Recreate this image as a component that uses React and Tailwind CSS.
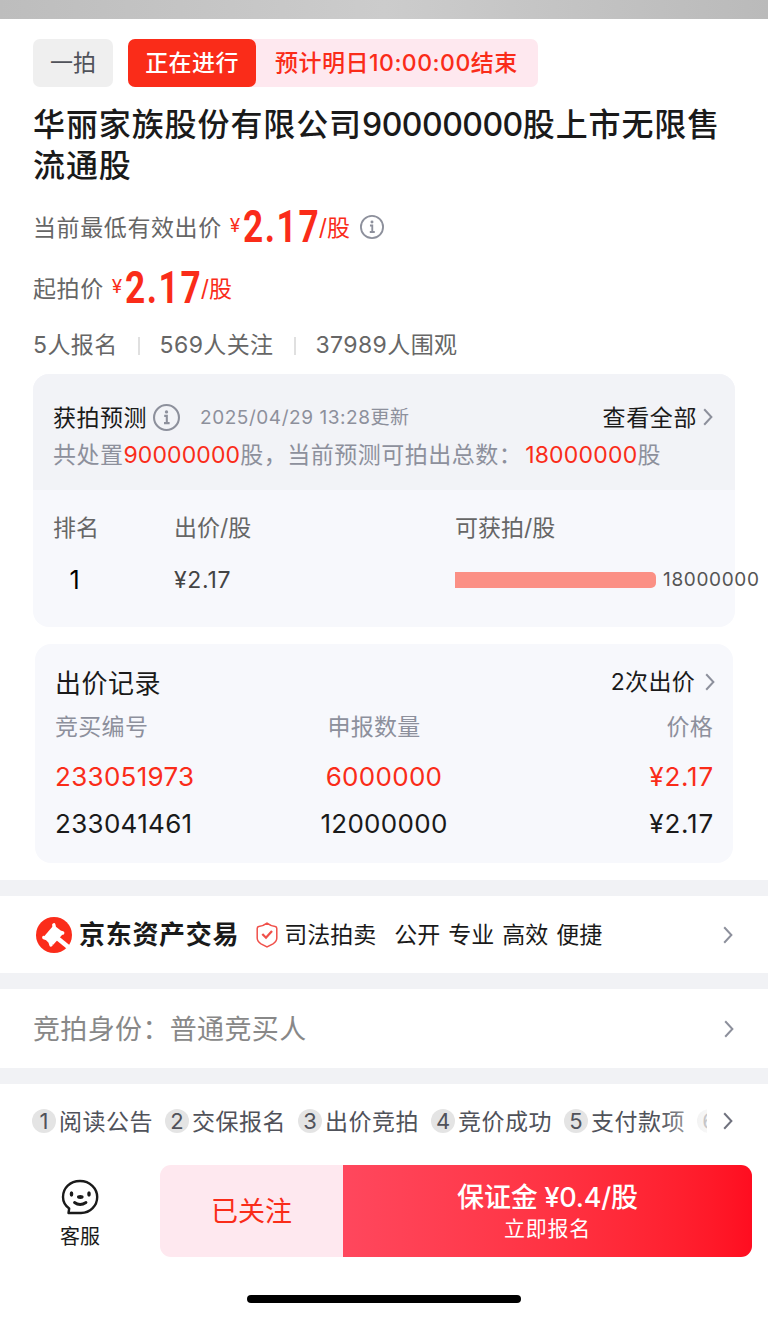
import React from "react";

const forecast = [{ rank: 1, price: "¥2.17", amount: "18000000" }];

const bids = [
  { id: "233051973", amount: "6000000", price: "¥2.17", leading: true },
  { id: "233041461", amount: "12000000", price: "¥2.17", leading: false },
];

const steps = ["阅读公告", "交保报名", "出价竞拍", "竞价成功", "支付款项"];

const slogans = ["公开", "专业", "高效", "便捷"];

function Chevron({ className = "" }) {
  return (
    <svg viewBox="0 0 10 18" className={`h-[18px] w-[10px] shrink-0 ${className}`} fill="none" stroke="currentColor" strokeWidth="2">
      <path d="M1.2 1.2L8.4 9l-7.2 7.8" />
    </svg>
  );
}

function InfoIcon({ className = "" }) {
  return (
    <svg viewBox="0 0 26 26" className={`shrink-0 text-[#8d909c] ${className}`} fill="none" stroke="currentColor" strokeWidth="2">
      <circle cx="13" cy="13" r="12" />
      <circle cx="13" cy="7.6" r="1.6" fill="currentColor" stroke="none" />
      <path d="M10.8 11.4h2.5v7M10.6 18.4h5.4" strokeWidth="2" />
    </svg>
  );
}

function GavelLogo() {
  return (
    <svg viewBox="0 0 36 36" className="h-9 w-9 shrink-0">
      <circle cx="18" cy="18" r="18" fill="#fb2c1a" />
      <path d="M17 9l9.500 8.500-9.500 10.500L8 19.500z" fill="#fff" />
      <g stroke="#fff" strokeLinecap="round" strokeLinejoin="round" fill="none">
        <path d="M17.800 7.800l.7 3 5.500 4.400 2.700.8" strokeWidth="3.400" />
        <path d="M7.800 20.600l3 1 3.200 3.200 1 3.200" strokeWidth="3.400" />
        <path d="M20 20l13.500 11" strokeWidth="4.600" strokeLinecap="butt" />
      </g>
    </svg>
  );
}

function ShieldIcon() {
  return (
    <svg viewBox="0 0 22 26" className="h-[26px] w-[22px] shrink-0" fill="none" stroke="#f0504a">
      <path d="M11 1.200C14 3.600 17 4.300 19.200 4.600Q20.800 4.900 20.800 6.500V16Q20.800 19.500 17 21.800L11 25 5 21.800Q1.200 19.500 1.200 16V6.500Q1.200 4.900 2.800 4.600C5 4.300 8 3.600 11 1.200z" strokeWidth="1.500" />
      <path d="M6.300 12l3.700 3.700 6-6.700" strokeWidth="2.300" />
    </svg>
  );
}

function ServiceIcon() {
  return (
    <svg viewBox="0 0 38 36" className="h-9 w-[38px]" fill="none" stroke="#1a1a1a" strokeWidth="2.4" strokeLinecap="round" strokeLinejoin="round">
      <path d="M7.500 34H20C29.500 34 36.200 26.500 36.200 18S29 2 19 2 2 9 2 18c0 4.500 2 8.500 6.200 11.500z" />
      <path d="M13.500 23.500q5.500 4 11.500 0" strokeWidth="2.800" />
      <g fill="#1a1a1a" stroke="none">
        <ellipse cx="10.5" cy="15" rx="1.8" ry="2.8" />
        <ellipse cx="28" cy="15" rx="1.8" ry="2.8" />
        <ellipse cx="19.3" cy="18" rx="3.3" ry="1.9" />
      </g>
    </svg>
  );
}

function Price({ label, children }) {
  return (
    <div className="flex h-[61px] items-center text-[23px] text-[#666]">
      <span className="pt-[3px] tracking-[0.6px]">{label}</span>
      <span className="ml-2 flex items-center text-[#fa2c19]">
        <span className="w-[13px] text-[19px]">¥</span>
        <span className="w-[76px] whitespace-nowrap">
          <span className="inline-block origin-left scale-x-[0.8] font-[Roboto] text-[44px] leading-[60px] font-bold tracking-[2px]">2.17</span>
        </span>
        <span className="pt-[3px] text-[23px]">/股</span>
      </span>
      {children}
    </div>
  );
}

function Forecast() {
  return (
    <section className="h-[253px] w-[702px] rounded-[16px] bg-[#f7f8fc]">
      <div className="h-[116px] rounded-t-[16px] bg-[#f2f3f7] px-5 pt-6">
        <div className="flex h-[38px] items-center">
          <span className="pt-0.5 text-[23px] tracking-[0.5px] text-[#1a1a1a]">获拍预测</span>
          <InfoIcon className="ml-1.5 h-[27px] w-[27px]" />
          <span className="ml-5 pt-0.5 text-[19px] tracking-[0.55px] text-[#8d909c]">2025/04/29 13:28更新</span>
          <span className="ml-auto pt-0.5 text-[23px] tracking-[0.6px] text-[#1a1a1a]">查看全部</span>
          <Chevron className="mr-0.5 ml-1.5 text-[#8d909c]" />
        </div>
        <p className="h-[38px] text-[23px] leading-[39px] tracking-[0.5px] whitespace-nowrap text-[#8d909c]">
          共处置<span className="tracking-[0.1px] text-[#fa2c19]">90000000</span>股，当前预测可拍出总数：
          <span className="ml-[3px] tracking-[0.2px] text-[#fa2c19]">18000000</span>股
        </p>
      </div>
      <div className="grid grid-cols-[121px_281px_1fr] pt-[13px] pl-5 text-[23px] text-[#666]">
        <span className="h-[51px] leading-[51px]">排名</span>
        <span className="h-[51px] leading-[51px]">出价/股</span>
        <span className="h-[51px] leading-[51px]">可获拍/股</span>
        {forecast.map((row) => (
          <React.Fragment key={row.rank}>
            <span className="w-[43px] text-center text-[25px] leading-[52px] text-black">{row.rank}</span>
            <span className="text-[23px] leading-[52px] tracking-[0.7px] text-[#444]">{row.price}</span>
            <span className="flex h-[51px] items-center">
              <i className="h-4 w-[201px] shrink-0 rounded-r-[5px] bg-[#fb9085]" />
              <span className="ml-[7px] pt-px text-[19px] tracking-[0.65px] text-[#555]">{row.amount}</span>
            </span>
          </React.Fragment>
        ))}
      </div>
    </section>
  );
}

function BidRecords() {
  return (
    <section className="mt-[17px] ml-0.5 h-[219px] w-[698px] rounded-[16px] bg-[#f7f8fc] px-5 pt-[15px]">
      <div className="flex h-[46px] items-center text-[#1a1a1a]">
        <span className="pt-0.5 text-[26px] tracking-[0.5px]">出价记录</span>
        <span className="ml-auto pt-px text-[23px] tracking-[0.3px]">2次出价</span>
        <Chevron className="-mr-0.5 ml-2.5 text-[#8d909c]" />
      </div>
      <div className="grid grid-cols-[210px_218px_230px] text-[23px] leading-[44px] tracking-[0.3px] text-[#8d909c]">
        <span>竞买编号</span>
        <span className="text-center">申报数量</span>
        <span className="text-right">价格</span>
      </div>
      <div className="pt-1">
        {bids.map((bid) => (
          <div
            key={bid.id}
            className={`grid grid-cols-[220px_218px_221px] text-[26px] leading-[47px] tracking-[0.3px] ${bid.leading ? "text-[#fa2c19]" : "text-[#1a1a1a]"}`}
          >
            <span>{bid.id}</span>
            <span className="text-center">{bid.amount}</span>
            <span className="text-right tracking-[0.8px]">{bid.price}</span>
          </div>
        ))}
      </div>
    </section>
  );
}

function StepNumber({ children }) {
  return (
    <span className="flex h-6 w-6 shrink-0 items-center justify-center rounded-full bg-[#e4e4e4] text-[22px] leading-6">{children}</span>
  );
}

function Steps() {
  return (
    <div className="flex h-[74px] items-center pl-8">
      <div className="relative flex w-[675px] items-center overflow-hidden text-[#50525a]">
        {steps.map((step, i) => (
          <div key={step} className="flex w-[133px] shrink-0 items-center whitespace-nowrap">
            <StepNumber>{i + 1}</StepNumber>
            <span className="ml-[3px] pt-0.5 text-[23px] tracking-[0.5px]">{step}</span>
          </div>
        ))}
        <StepNumber>{steps.length + 1}</StepNumber>
        <span className="absolute inset-y-0 right-0 w-12 bg-linear-to-r from-white/0 to-white/70" />
      </div>
      <Chevron className="ml-4 text-[#70727e]" />
    </div>
  );
}

export default function App() {
  return (
    <main className="h-[1319px] w-[768px] overflow-hidden bg-white font-['Inter','Noto_Sans_CJK_SC',sans-serif] text-[#1a1a1a]">
      <div className="h-[19px] bg-linear-to-r from-[#bdbdbd] via-[#cccccc] to-[#bababa]" />

      <div className="h-[861px] pt-5 pl-[33px]">
        <div className="flex h-12 text-[23px] leading-[48px]">
          <span className="w-20 rounded-[7px] bg-[#efefef] text-center text-[#50525a]">一拍</span>
          <div className="ml-[15px] flex w-[410px] rounded-[7px] bg-[#fee8ef]">
            <span className="w-32 rounded-[7px] bg-[#fa2c19] text-center font-medium tracking-[0.4px] text-white">正在进行</span>
            <span className="ml-[19px] font-medium tracking-[0.5px] whitespace-nowrap text-[#fa2c19]">预计明日10:00:00结束</span>
          </div>
        </div>

        <h1 className="mt-[17px] w-[710px] text-[32px] leading-[41px] font-medium tracking-[0.9px]">
          华丽家族股份有限公司<span className="tracking-[-0.5px]">90000000</span>股上市无限售
          <br />
          流通股
        </h1>

        <div className="mt-2.5">
          <Price label="当前最低有效出价">
            <InfoIcon className="ml-2.5 h-6 w-6" />
          </Price>
          <Price label="起拍价" />
        </div>

        <div className="flex h-14 items-center pb-px text-[23px] tracking-[0.4px] text-[#666]">
          <span>5人报名</span>
          <i className="mx-5 h-[18px] w-0.5 bg-[#e0e0e0]" />
          <span>569人关注</span>
          <i className="mx-5 h-[18px] w-0.5 bg-[#e0e0e0]" />
          <span>37989人围观</span>
        </div>

        <Forecast />
        <BidRecords />
      </div>

      <div className="flex h-[109px] items-center border-y-[16px] border-[#f1f2f5] pr-[35px] pl-9">
        <GavelLogo />
        <span className="ml-[7px] text-[26px] font-bold tracking-[0.7px]">京东资产交易</span>
        <span className="ml-[17px] flex items-center">
          <ShieldIcon />
          <span className="ml-1.5 pt-0.5 text-[23px]">司法拍卖</span>
        </span>
        <span className="ml-[18px] flex gap-2 pt-0.5 text-[23px]">
          {slogans.map((s) => (
            <span key={s}>{s}</span>
          ))}
        </span>
        <Chevron className="ml-auto text-[#8d909c]" />
      </div>

      <div className="flex h-[95px] items-center justify-between border-b-[16px] border-[#f1f2f5] pr-[34px] pl-[33px]">
        <span className="pt-[3px] text-[27px] tracking-[0.35px] text-[#888]">竞拍身份：普通竞买人</span>
        <Chevron className="text-[#8d909c]" />
      </div>

      <Steps />

      <footer>
        <div className="flex h-[106px] pt-[7px] pr-4">
          <div className="flex w-40 flex-col items-center pt-3.5">
            <ServiceIcon />
            <span className="mt-[7px] text-[20px] leading-[30px]">客服</span>
          </div>
          <button className="h-[92px] w-[183px] rounded-l-[11px] bg-[#fee8ef] pt-[3px] text-[27px] text-[#fa2c19]">已关注</button>
          <button className="flex h-[92px] flex-1 flex-col items-center justify-center rounded-r-[11px] bg-linear-to-r from-[#ff475d] to-[#ff0d20] pt-1 text-white">
            <span className="text-[27px] leading-[32px] font-medium tracking-[-0.2px]">保证金 ¥0.4/股</span>
            <span className="text-[21px] leading-[30px] tracking-[0.7px]">立即报名</span>
          </button>
        </div>
        <div className="mx-auto mt-[31px] h-2 w-[274px] rounded-full bg-black" />
      </footer>
    </main>
  );
}
